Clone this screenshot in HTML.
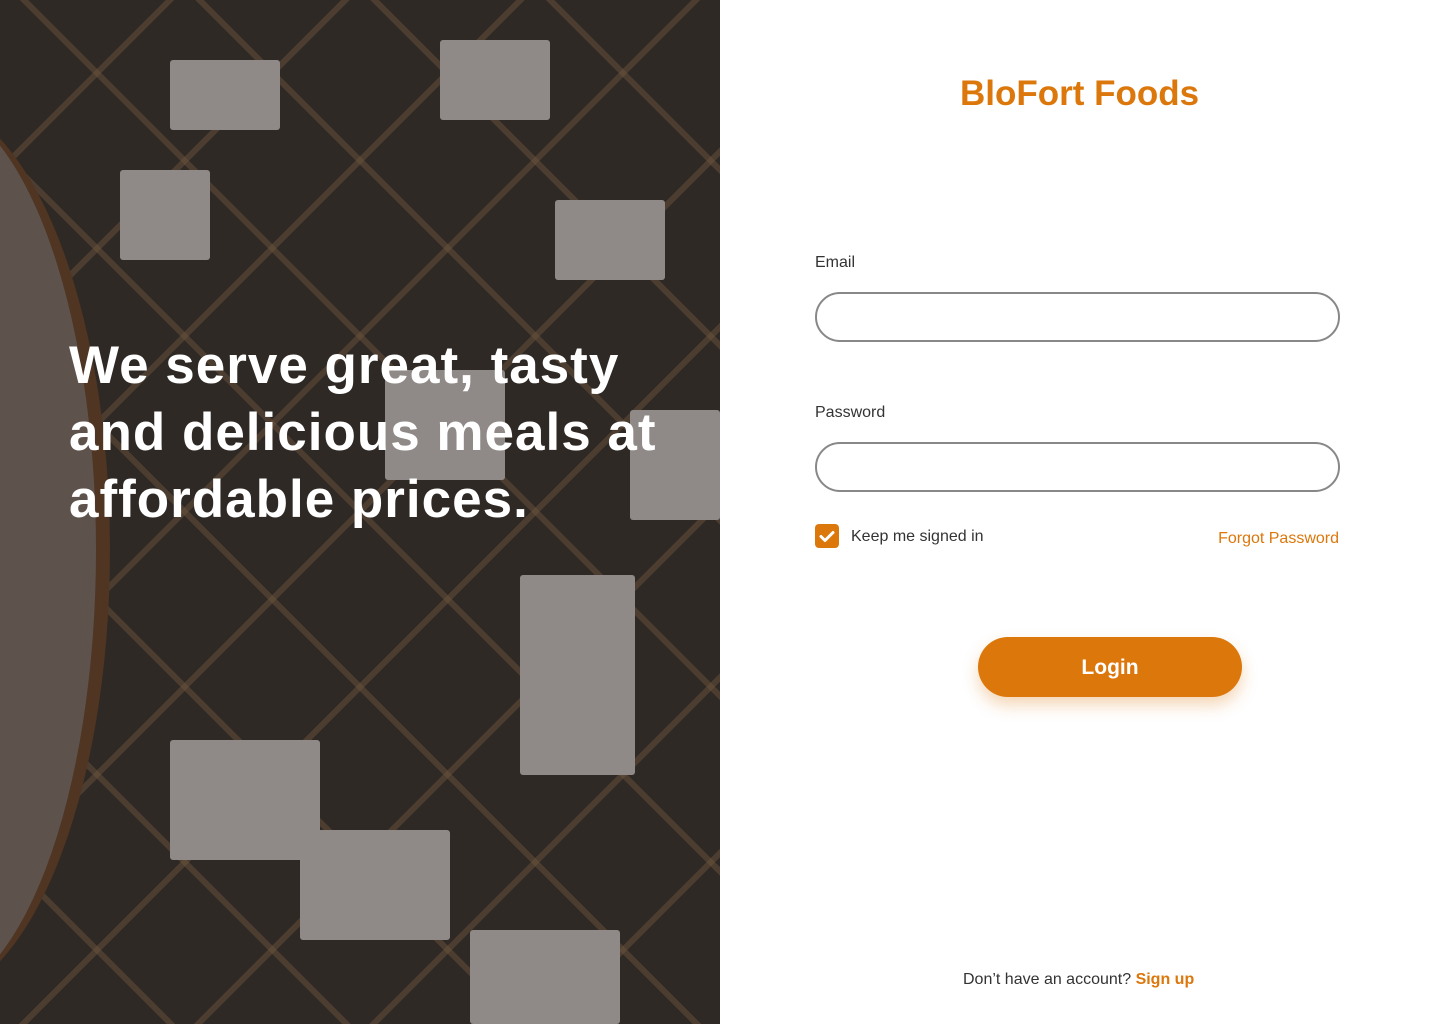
<!DOCTYPE html>
<html><head><meta charset="utf-8"><style>
*{margin:0;padding:0;box-sizing:border-box}
html,body{width:1440px;height:1024px;overflow:hidden}
body{font-family:"Liberation Sans",sans-serif;background:#fff;position:relative}
.left{position:absolute;left:0;top:0;width:720px;height:1024px;overflow:hidden;
background:
repeating-linear-gradient(45deg,transparent 0 118px,rgba(110,85,60,.45) 118px 124px),
repeating-linear-gradient(-45deg,transparent 0 118px,rgba(110,85,60,.45) 118px 124px),
#2f2925}
.tb{position:absolute;background:#8f8a87;border-radius:3px}
.curve{position:absolute;left:-260px;top:100px;width:370px;height:900px;border-radius:50%;background:#5e524d;border-right:14px solid #4f3522}
.left h1{position:absolute;left:69px;top:332px;color:#fff;font-size:53px;font-weight:bold;line-height:67px;letter-spacing:1px;width:600px}
.title{position:absolute;left:960px;top:74px;color:#dc770c;font-size:35px;font-weight:bold}
label{position:absolute;left:815px;font-size:16px;color:#333}
.in{position:absolute;left:815px;width:525px;height:50px;border:2px solid #888;border-radius:25px}
.cb{position:absolute;left:815px;top:524px;width:24px;height:24px;background:#dc770c;border-radius:4px}
.keep{position:absolute;left:851px;top:528px;font-size:16px;color:#333}
.fp{position:absolute;right:101px;top:530px;font-size:16px;color:#dc770c}
.btn{position:absolute;left:978px;top:637px;width:264px;height:60px;border-radius:30px;background:#dc770c;color:#fff;font-size:21px;font-weight:bold;text-align:center;line-height:62px;box-shadow:0 8px 16px rgba(220,119,12,.3)}
.su{position:absolute;left:963px;top:971px;font-size:16px;color:#333}
.su b{color:#dc770c}
</style></head><body>
<div class="left">
<div class="curve"></div>
<div class="tb" style="left:170px;top:60px;width:110px;height:70px"></div>
<div class="tb" style="left:440px;top:40px;width:110px;height:80px"></div>
<div class="tb" style="left:120px;top:170px;width:90px;height:90px"></div>
<div class="tb" style="left:555px;top:200px;width:110px;height:80px"></div>
<div class="tb" style="left:385px;top:370px;width:120px;height:110px"></div>
<div class="tb" style="left:630px;top:410px;width:90px;height:110px"></div>
<div class="tb" style="left:520px;top:575px;width:115px;height:200px"></div>
<div class="tb" style="left:170px;top:740px;width:150px;height:120px"></div>
<div class="tb" style="left:300px;top:830px;width:150px;height:110px"></div>
<div class="tb" style="left:470px;top:930px;width:150px;height:94px"></div>
<h1>We serve great, tasty and delicious meals at affordable prices.</h1>
</div>
<div class="title">BloFort Foods</div>
<label style="top:254px">Email</label>
<div class="in" style="top:292px"></div>
<label style="top:404px">Password</label>
<div class="in" style="top:442px"></div>
<div class="cb"><svg width="24" height="24" viewBox="0 0 24 24"><path d="M6 12.5l4 4 8-8" stroke="#fff" stroke-width="3" fill="none" stroke-linecap="round" stroke-linejoin="round"/></svg></div>
<div class="keep">Keep me signed in</div>
<div class="fp">Forgot Password</div>
<div class="btn">Login</div>
<div class="su">Don’t have an account? <b>Sign up</b></div>
</body></html>
